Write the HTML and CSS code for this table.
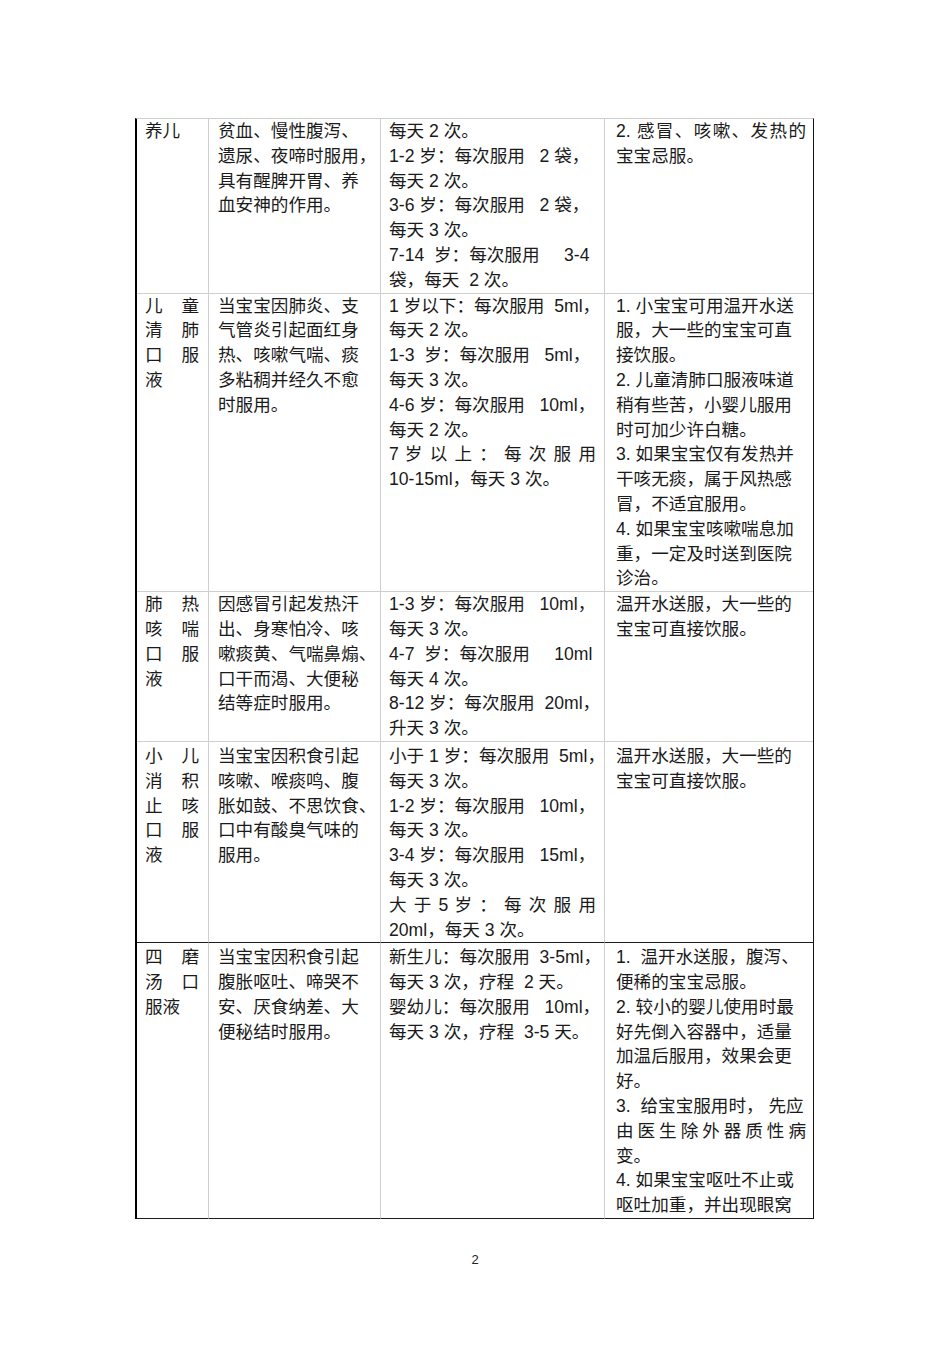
FILE: index.html
```html
<!DOCTYPE html>
<html lang="zh-CN">
<head>
<meta charset="utf-8">
<title>儿童用药</title>
<link rel="stylesheet" href="styles.css">
</head>
<body>
<div class="page">
  <table class="meds">
    <colgroup>
      <col class="c1"><col class="c2"><col class="c3"><col class="c4">
    </colgroup>
    <tbody>
      <tr>
        <td><div class="ln">养儿</div></td>
        <td>
          <div class="ln">贫血、慢性腹泻、</div>
          <div class="ln">遗尿、夜啼时服用，</div>
          <div class="ln">具有醒脾开胃、养</div>
          <div class="ln">血安神的作用。</div>
        </td>
        <td>
          <div class="ln">每天 2 次。</div>
          <div class="ln">1-2 岁：每次服用   2 袋，</div>
          <div class="ln">每天 2 次。</div>
          <div class="ln">3-6 岁：每次服用   2 袋，</div>
          <div class="ln">每天 3 次。</div>
          <div class="ln">7-14  岁：每次服用     3-4</div>
          <div class="ln">袋，每天  2 次。</div>
        </td>
        <td>
          <div class="ln j">2. 感冒、咳嗽、发热的</div>
          <div class="ln">宝宝忌服。</div>
        </td>
      </tr>
      <tr>
        <td>
          <div class="ln j">儿 童</div>
          <div class="ln j">清 肺</div>
          <div class="ln j">口 服</div>
          <div class="ln">液</div>
        </td>
        <td>
          <div class="ln">当宝宝因肺炎、支</div>
          <div class="ln">气管炎引起面红身</div>
          <div class="ln">热、咳嗽气喘、痰</div>
          <div class="ln">多粘稠并经久不愈</div>
          <div class="ln">时服用。</div>
        </td>
        <td>
          <div class="ln">1 岁以下：每次服用  5ml，</div>
          <div class="ln">每天 2 次。</div>
          <div class="ln">1-3  岁：每次服用   5ml，</div>
          <div class="ln">每天 3 次。</div>
          <div class="ln">4-6 岁：每次服用   10ml，</div>
          <div class="ln">每天 2 次。</div>
          <div class="ln j">7 岁 以 上 ： 每 次 服 用</div>
          <div class="ln">10-15ml，每天 3 次。</div>
        </td>
        <td>
          <div class="ln">1. 小宝宝可用温开水送</div>
          <div class="ln">服，大一些的宝宝可直</div>
          <div class="ln">接饮服。</div>
          <div class="ln">2. 儿童清肺口服液味道</div>
          <div class="ln">稍有些苦，小婴儿服用</div>
          <div class="ln">时可加少许白糖。</div>
          <div class="ln">3. 如果宝宝仅有发热并</div>
          <div class="ln">干咳无痰，属于风热感</div>
          <div class="ln">冒，不适宜服用。</div>
          <div class="ln">4. 如果宝宝咳嗽喘息加</div>
          <div class="ln">重，一定及时送到医院</div>
          <div class="ln">诊治。</div>
        </td>
      </tr>
      <tr>
        <td>
          <div class="ln j">肺 热</div>
          <div class="ln j">咳 喘</div>
          <div class="ln j">口 服</div>
          <div class="ln">液</div>
        </td>
        <td>
          <div class="ln">因感冒引起发热汗</div>
          <div class="ln">出、身寒怕冷、咳</div>
          <div class="ln">嗽痰黄、气喘鼻煽、</div>
          <div class="ln">口干而渴、大便秘</div>
          <div class="ln">结等症时服用。</div>
        </td>
        <td>
          <div class="ln">1-3 岁：每次服用   10ml，</div>
          <div class="ln">每天 3 次。</div>
          <div class="ln">4-7  岁：每次服用     10ml</div>
          <div class="ln">每天 4 次。</div>
          <div class="ln">8-12 岁：每次服用  20ml，</div>
          <div class="ln">升天 3 次。</div>
        </td>
        <td>
          <div class="ln">温开水送服，大一些的</div>
          <div class="ln">宝宝可直接饮服。</div>
        </td>
      </tr>
      <tr class="dark lower">
        <td>
          <div class="ln j">小 儿</div>
          <div class="ln j">消 积</div>
          <div class="ln j">止 咳</div>
          <div class="ln j">口 服</div>
          <div class="ln">液</div>
        </td>
        <td>
          <div class="ln">当宝宝因积食引起</div>
          <div class="ln">咳嗽、喉痰鸣、腹</div>
          <div class="ln">胀如鼓、不思饮食、</div>
          <div class="ln">口中有酸臭气味的</div>
          <div class="ln">服用。</div>
        </td>
        <td>
          <div class="ln">小于 1 岁：每次服用  5ml，</div>
          <div class="ln">每天 3 次。</div>
          <div class="ln">1-2 岁：每次服用   10ml，</div>
          <div class="ln">每天 3 次。</div>
          <div class="ln">3-4 岁：每次服用   15ml，</div>
          <div class="ln">每天 3 次。</div>
          <div class="ln j">大 于  5  岁 ： 每 次 服 用</div>
          <div class="ln">20ml，每天 3 次。</div>
        </td>
        <td>
          <div class="ln">温开水送服，大一些的</div>
          <div class="ln">宝宝可直接饮服。</div>
        </td>
      </tr>
      <tr class="dark lower">
        <td>
          <div class="ln j">四 磨</div>
          <div class="ln j">汤 口</div>
          <div class="ln">服液</div>
        </td>
        <td>
          <div class="ln">当宝宝因积食引起</div>
          <div class="ln">腹胀呕吐、啼哭不</div>
          <div class="ln">安、厌食纳差、大</div>
          <div class="ln">便秘结时服用。</div>
        </td>
        <td>
          <div class="ln">新生儿：每次服用  3-5ml，</div>
          <div class="ln">每天 3 次，疗程  2 天。</div>
          <div class="ln">婴幼儿：每次服用   10ml，</div>
          <div class="ln">每天 3 次，疗程  3-5 天。</div>
        </td>
        <td>
          <div class="ln">1.  温开水送服，腹泻、</div>
          <div class="ln">便稀的宝宝忌服。</div>
          <div class="ln">2. 较小的婴儿使用时最</div>
          <div class="ln">好先倒入容器中，适量</div>
          <div class="ln">加温后服用，效果会更</div>
          <div class="ln">好。</div>
          <div class="ln">3.  给宝宝服用时， 先应</div>
          <div class="ln j">由医生除外器质性病</div>
          <div class="ln">变。</div>
          <div class="ln">4. 如果宝宝呕吐不止或</div>
          <div class="ln">呕吐加重，并出现眼窝</div>
        </td>
      </tr>
    </tbody>
  </table>
  <div class="pageno">2</div>
</div>
</body>
</html>
```

FILE: styles.css
```css
* {
  box-sizing: border-box;
}

html, body {
  margin: 0;
  padding: 0;
  background: #ffffff;
}

body {
  font-family: "Liberation Sans", "Noto Sans CJK SC", sans-serif;
  color: #1a1a1a;
}

.page {
  width: 950px;
  height: 1345px;
  padding-top: 118px;
  padding-left: 135px;
}

.meds {
  border-collapse: separate;
  border-spacing: 0;
  table-layout: fixed;
  width: 679px;
  border-left: 2px solid #000000;
  border-right: 1px solid #111111;
  border-top: 1px solid #cfcfcf;
  font-size: 17.6px;
  line-height: 24.8px;
}

.c1 { width: 72px; }
.c2 { width: 172px; }
.c3 { width: 224px; }
.c4 { width: 208px; }

.meds td {
  vertical-align: top;
  padding: 0 8px 0 9px;
  border-right: 1px solid #cfcfcf;
  border-bottom: 1px solid #cfcfcf;
  overflow: visible;
}

.meds td:first-child {
  padding-left: 8px;
  padding-right: 9px;
}

.meds td:nth-child(3) {
  padding-left: 8px;
}

.meds td:last-child {
  border-right: 0;
  padding-left: 11px;
  padding-right: 7px;
}

.meds tr.dark td {
  border-bottom: 1px solid #1c1c1c;
}

.meds tr.lower td {
  padding-top: 2px;
}

.ln {
  white-space: pre;
}

.ln.j {
  white-space: normal;
  text-align: justify;
  text-align-last: justify;
}

.pageno {
  width: 680px;
  margin-top: 33px;
  text-align: center;
  font-family: "Liberation Sans", sans-serif;
  font-size: 13px;
  line-height: 15px;
  color: #222222;
}
```
